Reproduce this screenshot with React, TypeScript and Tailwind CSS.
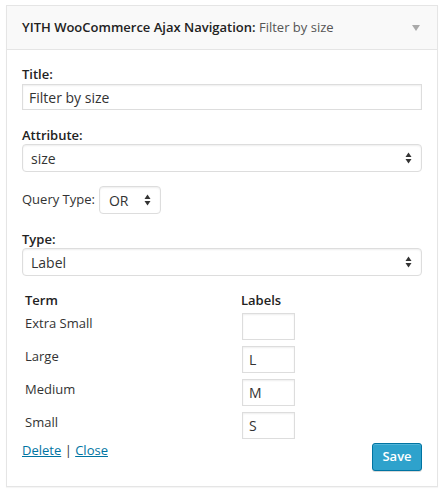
import React from 'react';

function SelectArrows() {
  return (
    <svg width="7" height="12" viewBox="0 0 7 12" className="shrink-0">
      <path d="M3.5 0.5 L6.5 5 L0.5 5 Z" fill="#333" />
      <path d="M0.5 7 L6.5 7 L3.5 11.5 Z" fill="#333" />
    </svg>
  );
}

function FakeSelect({ value, className = '' }: { value: string; className?: string }) {
  return (
    <div
      className={`flex items-center justify-between rounded-[4px] border border-[#ddd] bg-white pl-[8px] pr-[9px] text-[14px] text-[#333] shadow-[inset_0_1px_2px_rgba(0,0,0,0.07)] ${className}`}
    >
      <span>{value}</span>
      <SelectArrows />
    </div>
  );
}

const terms = [
  { name: 'Extra Small', label: '' },
  { name: 'Large', label: 'L' },
  { name: 'Medium', label: 'M' },
  { name: 'Small', label: 'S' },
];

export default function App() {
  return (
    <div
      className="min-h-[492px] bg-white pl-[6px] pt-[5px]"
      style={{ fontFamily: '"Open Sans", "Liberation Sans", sans-serif' }}
    >
      <div className="w-[432px] border border-[#e5e5e5] bg-white shadow-[0_1px_1px_rgba(0,0,0,0.04)]">
        {/* header */}
        <div className="flex h-[44px] items-center justify-between border-b border-[#e5e5e5] bg-[#f9f9f9] pl-[15px] pr-[17px]">
          <h3 className="text-[13px] font-semibold text-[#222]">
            YITH WooCommerce Ajax Navigation: <span className="font-normal text-[#555]">Filter by size</span>
          </h3>
          <svg width="8" height="6" viewBox="0 0 8 6">
            <path d="M0 0 L8 0 L4 6 Z" fill="#aaa" />
          </svg>
        </div>

        {/* body */}
        <div className="px-[15px] pt-[15px] pb-[15px] text-[13px] text-[#444]">
          <p className="text-[13px] font-semibold leading-[19px] text-[#222]">Title:</p>
          <div className="flex h-[26px] items-center border border-[#ddd] bg-white px-[6px] text-[14px] text-[#333] shadow-[inset_0_1px_2px_rgba(0,0,0,0.07)]">
            Filter by size
          </div>

          <p className="mt-[16px] text-[13px] font-semibold leading-[18px] text-[#222]">Attribute:</p>
          <FakeSelect value="size" className="h-[28px]" />

          <div className="mt-[14px] flex items-center gap-[4px]">
            <span className="text-[13px] text-[#333]">Query Type:</span>
            <FakeSelect value="OR" className="h-[28px] w-[62px] pl-[9px]" />
          </div>

          <p className="mt-[16px] text-[13px] font-semibold leading-[18px] text-[#222]">Type:</p>
          <FakeSelect value="Label" className="h-[28px]" />

          {/* terms table */}
          <div className="mt-[15px] pl-[3px]">
            <div className="flex text-[13px] font-semibold leading-[18px] text-[#222]">
              <span className="w-[216px]">Term</span>
              <span>Labels</span>
            </div>
            <div className="mt-[4px] flex flex-col gap-[6px]">
              {terms.map((t) => (
                <div key={t.name} className="flex">
                  <span className="w-[217px] pt-[1px] text-[13px] leading-[18px] text-[#333]">{t.name}</span>
                  <div className="flex h-[27px] w-[53px] items-center border border-[#ddd] bg-white px-[6px] text-[14px] text-[#333] shadow-[inset_0_1px_2px_rgba(0,0,0,0.07)]">
                    {t.label}
                  </div>
                </div>
              ))}
            </div>
          </div>

          {/* footer */}
          <div className="mt-[4px] flex items-start justify-between">
            <div className="-mt-[2px] text-[13px] text-[#333]">
              <a href="#" className="text-[#0074a2] underline">Delete</a>
              {' | '}
              <a href="#" className="text-[#0074a2] underline">Close</a>
            </div>
            <button className="h-[28px] w-[50px] rounded-[3px] border border-[#0074a2] bg-[#2ea2cc] text-[13px] font-semibold text-white shadow-[inset_0_1px_0_rgba(120,200,230,0.5),0_1px_0_rgba(0,0,0,0.15)]">
              Save
            </button>
          </div>
        </div>
      </div>
    </div>
  );
}
